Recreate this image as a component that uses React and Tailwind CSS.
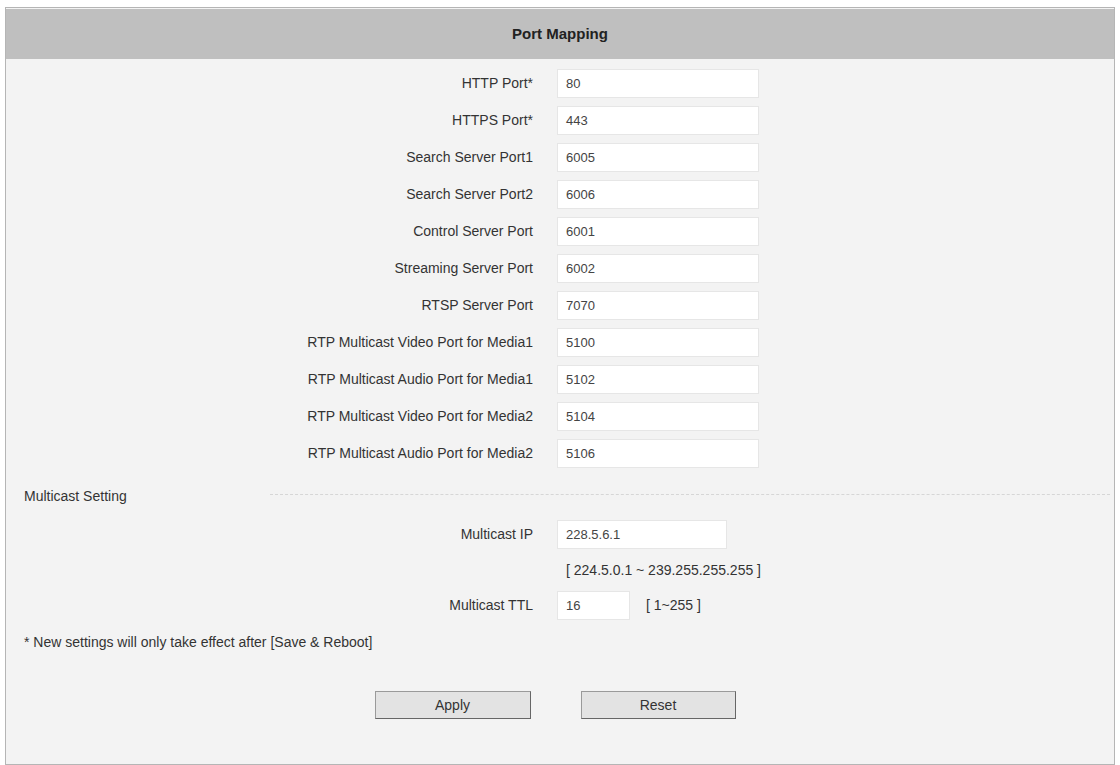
import React from "react";

const ports = [
  ["HTTP Port*", "80"],
  ["HTTPS Port*", "443"],
  ["Search Server Port1", "6005"],
  ["Search Server Port2", "6006"],
  ["Control Server Port", "6001"],
  ["Streaming Server Port", "6002"],
  ["RTSP Server Port", "7070"],
  ["RTP Multicast Video Port for Media1", "5100"],
  ["RTP Multicast Audio Port for Media1", "5102"],
  ["RTP Multicast Video Port for Media2", "5104"],
  ["RTP Multicast Audio Port for Media2", "5106"],
];

const Row = ({ label, children }) => (
  <div className="flex items-center h-[37px]">
    <div className="w-[527px] text-right">{label}</div>
    <div className="ml-[24px] flex items-center">{children}</div>
  </div>
);

const Field = ({ value, w = "w-[202px]" }) => (
  <div className={`${w} h-[29px] bg-white border border-[#e6e6e6] px-[8px] flex items-center text-[13px] text-[#444]`}>
    {value}
  </div>
);

export default function App() {
  return (
    <div className="w-[1120px] h-[765px] bg-white pt-[7px] px-[5px] font-[Liberation_Sans,Arial,sans-serif] text-[14px] text-[#333]">
      <div className="h-[758px] border border-[#b5b5b5] bg-[#f3f3f3]">
        <div className="h-[50px] mt-[1px] bg-[#bfbfbf] flex items-center justify-center font-bold text-[15px] text-[#222]">
          Port Mapping
        </div>
        <div className="pt-[6px]">
          {ports.map(([l, v]) => (
            <Row key={l} label={l}>
              <Field value={v} />
            </Row>
          ))}
        </div>
        <div className="flex items-center h-[40px] mt-[4px]">
          <div className="w-[264px] pl-[18px]">Multicast Setting</div>
          <div className="flex-1 mr-[4px] border-t border-dashed border-[#d6d6d6] -mt-[4px]" />
        </div>
        <Row label="Multicast IP">
          <Field value="228.5.6.1" w="w-[170px]" />
        </Row>
        <div className="pl-[560px] h-[34px] flex items-center">[ 224.5.0.1 ~ 239.255.255.255 ]</div>
        <Row label="Multicast TTL">
          <Field value="16" w="w-[73px]" />
          <span className="ml-[16px]">[ 1~255 ]</span>
        </Row>
        <div className="pl-[18px] h-[36px] flex items-center">* New settings will only take effect after [Save &amp; Reboot]</div>
        <div className="flex justify-center gap-[50px] mt-[31px] pr-[10px]">
          <button className="w-[156px] h-[28px] bg-[#e3e3e3] border border-[#9a9a9a] border-r-[#666] border-b-[#666] text-[#333]">Apply</button>
          <button className="w-[155px] h-[28px] bg-[#e3e3e3] border border-[#9a9a9a] border-r-[#666] border-b-[#666] text-[#333]">Reset</button>
        </div>
      </div>
    </div>
  );
}
